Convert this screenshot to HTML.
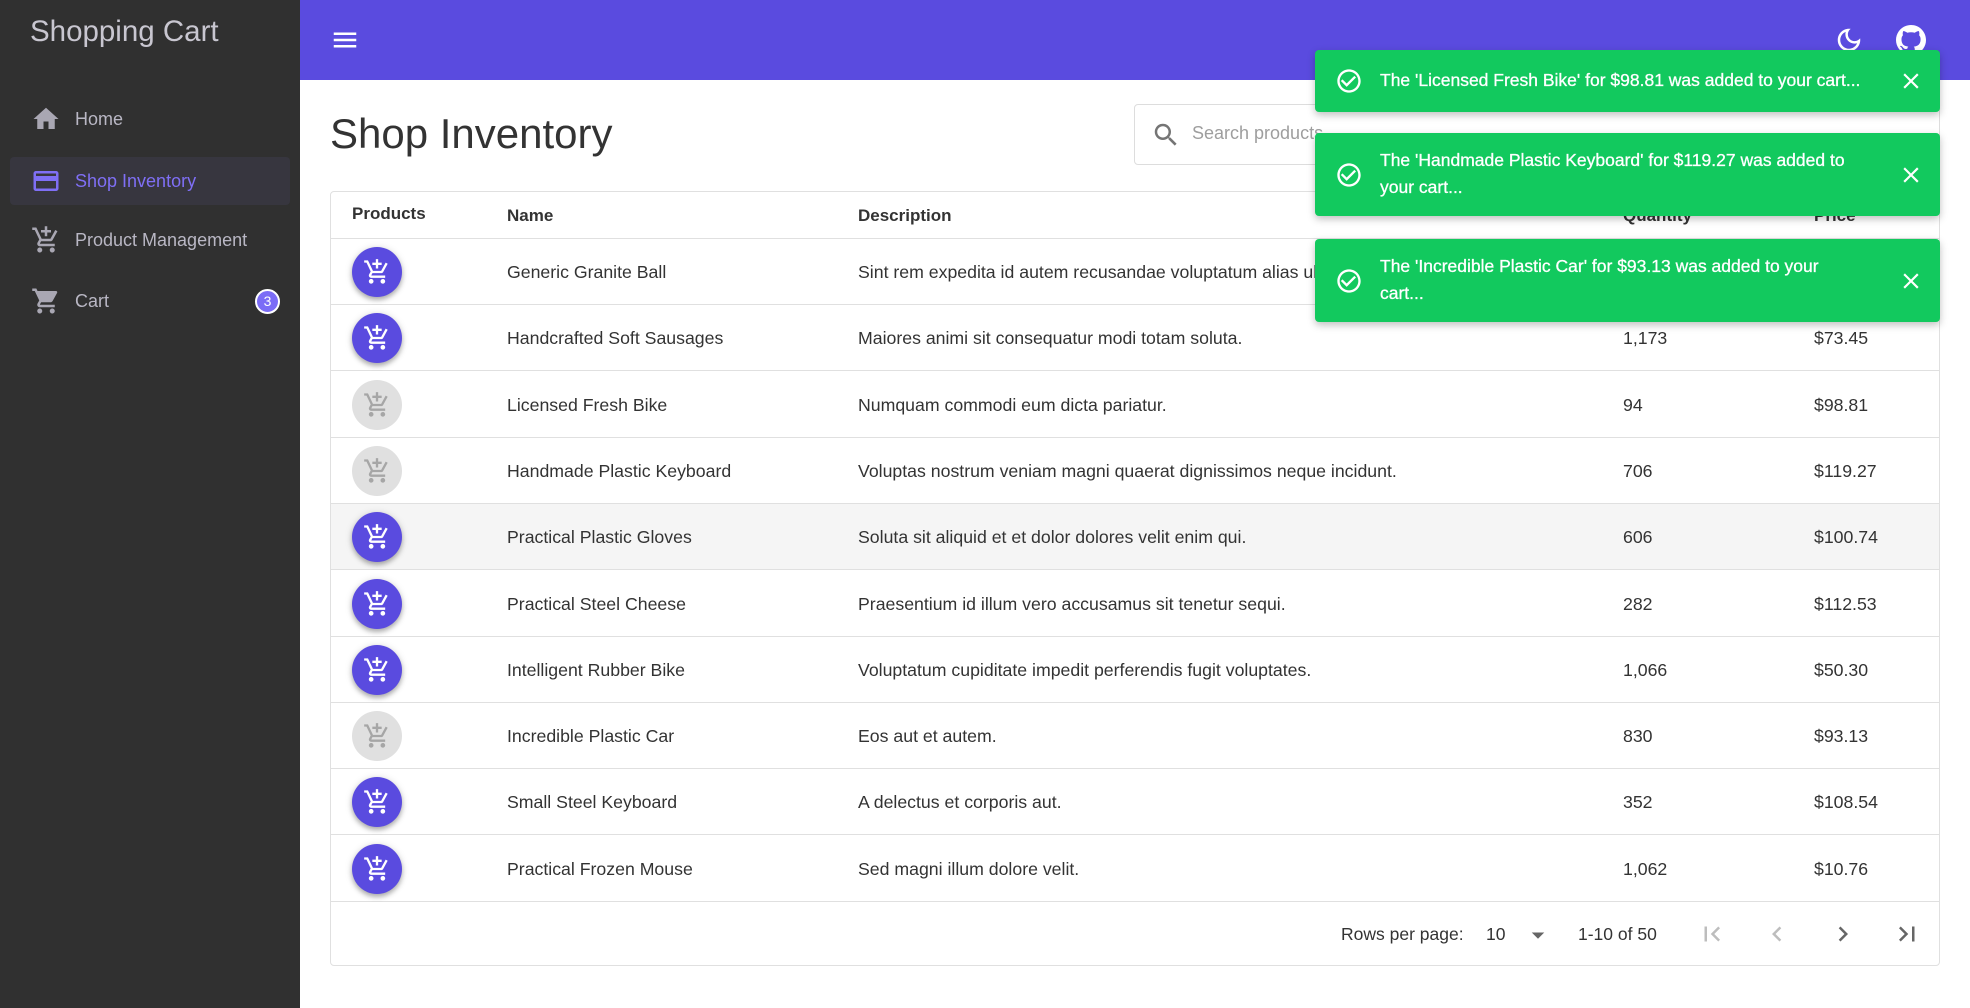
<!DOCTYPE html>
<html><head><meta charset="utf-8"><style>
*{box-sizing:border-box;margin:0;padding:0}
body{width:1970px;height:1008px;overflow:hidden;font-family:"Liberation Sans",sans-serif;background:#fff;position:relative;color:rgba(0,0,0,.87)}
.side{position:absolute;left:0;top:0;width:300px;height:1008px;background:#303030}
.side h1{position:absolute;left:30px;top:15px;font-size:29.5px;font-weight:400;color:#c8c6d0}
.nav{position:absolute;left:10px;width:280px;height:48px;display:flex;align-items:center;color:#b9b7c4;font-size:18px}
.nav svg{position:absolute;left:21px;width:30px;height:30px;fill:#a9a7b3}
.nav span{position:absolute;left:65px}
.top{position:absolute;left:300px;top:0;width:1670px;height:80px;background:#5a4bdf}
.abs{position:absolute}
.tbl{position:absolute;left:330px;top:191px;width:1610px;height:775px;border:1px solid #e0e0e0;border-radius:4px}
.row{position:absolute;left:0;width:1608px;height:66px;border-bottom:1px solid #e0e0e0;font-size:17.7px}
.row div{position:absolute;top:0;line-height:66px;color:#333}
.btn{position:absolute;left:21px;top:8px;width:50px;height:50px;border-radius:50%;background:#5a4bdf;box-shadow:0 3px 5px rgba(0,0,0,.25),0 1px 8px rgba(0,0,0,.15)}
.btn svg{position:absolute;left:11px;top:11px;width:28px;height:28px;fill:#fff}
.btn.dis{background:#e0e0e0;box-shadow:none}.btn.dis svg{fill:#a6a6a6}
.toast{position:absolute;left:1315px;width:625px;background:#12c95e;border-radius:4px;box-shadow:0 3px 8px rgba(0,0,0,.25);color:#fff;font-size:17.5px}
.toast .chk{position:absolute;left:20px;width:28px;height:28px;fill:#fff}
.toast .x{position:absolute;right:16px;width:26px;height:26px;fill:#fff}
.toast p{position:absolute;left:65px;width:480px;line-height:27px;-webkit-text-stroke:0.3px #fff}
.pg svg{position:absolute;width:30px;height:30px}
</style></head><body>
<div class="side">
<h1>Shopping Cart</h1>
<div class="nav" style="top:95px"><svg viewBox="0 0 24 24"><path d="M10 20v-6h4v6h5v-8h3L12 3 2 12h3v8z"/></svg><span>Home</span></div>
<div class="nav" style="top:157px;background:#37363f;border-radius:4px;color:#7f6ff5"><svg viewBox="0 0 24 24" style="fill:#7f6ff5"><path d="M20 4H4c-1.11 0-1.99.89-1.99 2L2 18c0 1.11.89 2 2 2h16c1.11 0 2-.89 2-2V6c0-1.11-.89-2-2-2zm0 14H4v-6h16v6zm0-10H4V6h16v2z"/></svg><span>Shop Inventory</span></div>
<div class="nav" style="top:216px"><svg viewBox="0 0 24 24"><path d="M11 9h2V6h3V4h-3V1h-2v3H8v2h3v3zm-4 9c-1.1 0-1.99.9-1.99 2S5.9 22 7 22s2-.9 2-2-.9-2-2-2zm10 0c-1.1 0-1.99.9-1.99 2s.89 2 1.99 2 2-.9 2-2-.9-2-2-2zm-9.830-3.25l.03-.12.9-1.63h7.45c.75 0 1.41-.41 1.75-1.03l3.86-7.01L19.42 4h-.01l-1.1 2-2.76 5H8.53l-.13-.27L6.160 6l-.95-2-.94-2H1v2h2l3.6 7.59-1.35 2.45c-.16.28-.25.61-.25.96 0 1.1.9 2 2 2h12v-2H7.42c-.13 0-.25-.11-.25-.25z"/></svg><span>Product Management</span></div>
<div class="nav" style="top:277px"><svg viewBox="0 0 24 24"><path d="M7 18c-1.1 0-1.99.9-1.99 2S5.9 22 7 22s2-.9 2-2-.9-2-2-2zM1 2v2h2l3.6 7.59-1.35 2.45c-.16.28-.25.61-.25.96 0 1.1.9 2 2 2h12v-2H7.42c-.14 0-.25-.11-.25-.25l.03-.12.9-1.63h7.45c.75 0 1.41-.41 1.75-1.03l3.58-6.49A1.003 1.003 0 0020 4H5.21l-.94-2H1zm16 16c-1.1 0-1.99.9-1.99 2s.89 2 1.99 2 2-.9 2-2-.9-2-2-2z"/></svg><span>Cart</span>
<div style="position:absolute;left:245px;top:12px;width:25px;height:25px;border-radius:50%;background:#7b6cf6;border:2px solid #fff;color:#fff;font-size:14px;text-align:center;line-height:21px">3</div></div>
</div>
<div class="top">
<svg class="abs" style="left:30px;top:25px;width:30px;height:30px;fill:#fff" viewBox="0 0 24 24"><path d="M3 18h18v-2H3v2zm0-5h18v-2H3v2zm0-7v2h18V6H3z"/></svg>
<svg class="abs" style="left:1534px;top:25px;width:30px;height:30px;fill:#fff" viewBox="0 0 24 24"><path d="M9.37 5.51c-.18.64-.27 1.31-.27 1.99 0 4.08 3.32 7.4 7.4 7.4.68 0 1.35-.09 1.99-.27C17.45 17.19 14.93 19 12 19c-3.86 0-7-3.14-7-7 0-2.930 1.81-5.45 4.37-6.49zM12 3c-4.97 0-9 4.03-9 9s4.030 9 9 9 9-4.03 9-9c0-.46-.04-.92-.1-1.36-.98 1.37-2.58 2.26-4.4 2.26-2.98 0-5.4-2.42-5.4-5.4 0-1.81.89-3.42 2.26-4.4-.44-.06-.9-.1-1.36-.1z"/></svg>
<svg class="abs" style="left:1596px;top:25px;width:30px;height:30px;fill:#fff" viewBox="0 0 16 16"><path d="M8 0C3.58 0 0 3.58 0 8c0 3.54 2.29 6.53 5.47 7.59.4.07.55-.17.55-.38 0-.19-.01-.82-.01-1.49-2.01.37-2.53-.49-2.69-.94-.09-.23-.48-.94-.82-1.13-.28-.15-.68-.52-.01-.53.63-.01 1.08.58 1.23.82.72 1.21 1.87.87 2.33.66.07-.52.28-.87.51-1.070-1.78-.2-3.64-.89-3.640-3.95 0-.87.31-1.59.82-2.15-.08-.2-.36-1.02.08-2.12 0 0 .67-.21 2.2.82.64-.18 1.32-.27 2-.27.68 0 1.36.09 2 .27 1.53-1.04 2.2-.82 2.2-.82.44 1.1.16 1.92.08 2.12.51.56.82 1.27.82 2.15 0 3.07-1.87 3.75-3.65 3.95.29.25.54.73.54 1.48 0 1.07-.01 1.93-.01 2.2 0 .21.15.46.55.38A8.013 8.013 0 0016 8c0-4.42-3.58-8-8-8z"/></svg>
</div>
<div class="abs" style="left:330px;top:110px;font-size:42px;color:#333">Shop Inventory</div>
<div class="abs" style="left:1134px;top:104px;width:806px;height:61px;border:1px solid #ddd;border-radius:4px">
<svg class="abs" style="left:16px;top:15px;width:30px;height:30px;fill:#757575" viewBox="0 0 24 24"><path d="M15.5 14h-.79l-.28-.27C15.41 12.59 16 11.11 16 9.5 16 5.91 13.09 3 9.5 3S3 5.91 3 9.5 5.91 16 9.5 16c1.61 0 3.09-.59 4.23-1.57l.27.28v.79l5 4.99L20.49 19l-4.99-5zm-6 0C7.01 14 5 11.99 5 9.5S7.01 5 9.5 5 14 7.01 14 9.5 11.99 14 9.5 14z"/></svg>
<div class="abs" style="left:57px;top:18px;font-size:18px;color:#9e9e9e">Search products</div></div>
<div class="tbl">
<div class="row" style="top:0;height:47px;font-weight:bold;font-size:17px"><div style="left:21px;line-height:44px">Products</div><div style="left:176px;line-height:47px">Name</div><div style="left:527px;line-height:47px">Description</div><div style="left:1292px;line-height:47px">Quantity</div><div style="left:1483px;line-height:47px">Price</div></div>
<div id="rows"></div>
<div class="abs" style="left:0;top:710px;width:1608px;height:64px;font-size:17.5px;color:#333">
<div class="abs" style="left:1010px;top:22px">Rows per page:</div>
<div class="abs" style="left:1155px;top:22px">10</div>
<svg class="abs" style="left:1192px;top:18px;width:30px;height:30px;fill:#666" viewBox="0 0 24 24"><path d="M7 10l5 5 5-5z"/></svg>
<div class="abs" style="left:1247px;top:22px">1-10 of 50</div>
<div class="pg">
<svg style="left:1366px;top:17px;fill:#bdbdbd" viewBox="0 0 24 24"><path d="M18.41 16.59L13.82 12l4.59-4.59L17 6l-6 6 6 6zM6 6h2v12H6z"/></svg>
<svg style="left:1431px;top:17px;fill:#bdbdbd" viewBox="0 0 24 24"><path d="M15.41 7.41L14 6l-6 6 6 6 1.41-1.41L10.83 12z"/></svg>
<svg style="left:1497px;top:17px;fill:#666" viewBox="0 0 24 24"><path d="M10 6L8.59 7.41 13.17 12l-4.58 4.590L10 18l6-6z"/></svg>
<svg style="left:1561px;top:17px;fill:#666" viewBox="0 0 24 24"><path d="M5.59 7.41L10.18 12l-4.59 4.59L7 18l6-6-6-6zM16 6h2v12h-2z"/></svg>
</div></div>
</div>
<script>
var d=[["Generic Granite Ball","Sint rem expedita id autem recusandae voluptatum alias ullam.","93","$107.78",0],
["Handcrafted Soft Sausages","Maiores animi sit consequatur modi totam soluta.","1,173","$73.45",0],
["Licensed Fresh Bike","Numquam commodi eum dicta pariatur.","94","$98.81",1],
["Handmade Plastic Keyboard","Voluptas nostrum veniam magni quaerat dignissimos neque incidunt.","706","$119.27",1],
["Practical Plastic Gloves","Soluta sit aliquid et et dolor dolores velit enim qui.","606","$100.74",0],
["Practical Steel Cheese","Praesentium id illum vero accusamus sit tenetur sequi.","282","$112.53",0],
["Intelligent Rubber Bike","Voluptatum cupiditate impedit perferendis fugit voluptates.","1,066","$50.30",0],
["Incredible Plastic Car","Eos aut et autem.","830","$93.13",1],
["Small Steel Keyboard","A delectus et corporis aut.","352","$108.54",0],
["Practical Frozen Mouse","Sed magni illum dolore velit.","1,062","$10.76",0]];
var ic='<svg viewBox="0 0 24 24"><path d="M11 9h2V6h3V4h-3V1h-2v3H8v2h3v3zm-4 9c-1.1 0-1.99.9-1.99 2S5.9 22 7 22s2-.9 2-2-.9-2-2-2zm10 0c-1.1 0-1.99.9-1.99 2s.89 2 1.99 2 2-.9 2-2-.9-2-2-2zm-9.83-3.25l.03-.12.9-1.63h7.45c.75 0 1.41-.41 1.75-1.03l3.86-7.01L19.42 4h-.01l-1.1 2-2.76 5H8.53l-.13-.27L6.16 6l-.95-2-.94-2H1v2h2l3.6 7.59-1.35 2.45c-.16.28-.25.61-.25.96 0 1.1.9 2 2 2h12v-2H7.42c-.13 0-.25-.11-.25-.25z"/></svg>';
var h='';d.forEach(function(r,i){h+='<div class="row" style="top:'+(47+i*66.3)+'px'+(i==4?';background:#f5f5f5':'')+'"><span class="btn'+(r[4]?' dis':'')+'">'+ic+'</span><div style="left:176px">'+r[0]+'</div><div style="left:527px">'+r[1]+'</div><div style="left:1292px">'+r[2]+'</div><div style="left:1483px">'+r[3]+'</div></div>';});
document.getElementById('rows').innerHTML=h;
</script>
<div class="toast" style="top:50px;height:62px"><svg class="chk" style="top:17px" viewBox="0 0 24 24"><path d="M16.59 7.58L10 14.17l-3.59-3.58L5 12l5 5 8-8zM12 2C6.48 2 2 6.48 2 12s4.48 10 10 10 10-4.48 10-10S17.52 2 12 2zm0 18c-4.42 0-8-3.58-8-8s3.58-8 8-8 8 3.58 8 8-3.58 8-8 8z"/></svg><p style="top:17px;width:520px">The 'Licensed Fresh Bike' for $98.81 was added to your cart...</p><svg class="x" style="top:18px" viewBox="0 0 24 24"><path d="M19 6.41L17.59 5 12 10.59 6.41 5 5 6.41 10.59 12 5 17.59 6.41 19 12 13.41 17.59 19 19 17.59 13.41 12z"/></svg></div>
<div class="toast" style="top:133px;height:83px"><svg class="chk" style="top:28px" viewBox="0 0 24 24"><path d="M16.59 7.58L10 14.17l-3.59-3.58L5 12l5 5 8-8zM12 2C6.48 2 2 6.48 2 12s4.48 10 10 10 10-4.48 10-10S17.52 2 12 2zm0 18c-4.42 0-8-3.58-8-8s3.58-8 8-8 8 3.58 8 8-3.58 8-8 8z"/></svg><p style="top:14px">The 'Handmade Plastic Keyboard' for $119.27 was added to your cart...</p><svg class="x" style="top:29px" viewBox="0 0 24 24"><path d="M19 6.41L17.59 5 12 10.59 6.41 5 5 6.41 10.59 12 5 17.59 6.41 19 12 13.41 17.59 19 19 17.59 13.41 12z"/></svg></div>
<div class="toast" style="top:239px;height:83px"><svg class="chk" style="top:28px" viewBox="0 0 24 24"><path d="M16.59 7.58L10 14.17l-3.59-3.58L5 12l5 5 8-8zM12 2C6.48 2 2 6.48 2 12s4.48 10 10 10 10-4.48 10-10S17.52 2 12 2zm0 18c-4.42 0-8-3.58-8-8s3.58-8 8-8 8 3.58 8 8-3.58 8-8 8z"/></svg><p style="top:14px">The 'Incredible Plastic Car' for $93.13 was added to your cart...</p><svg class="x" style="top:29px" viewBox="0 0 24 24"><path d="M19 6.41L17.59 5 12 10.59 6.41 5 5 6.41 10.59 12 5 17.59 6.41 19 12 13.41 17.59 19 19 17.59 13.41 12z"/></svg></div>
</body></html>
